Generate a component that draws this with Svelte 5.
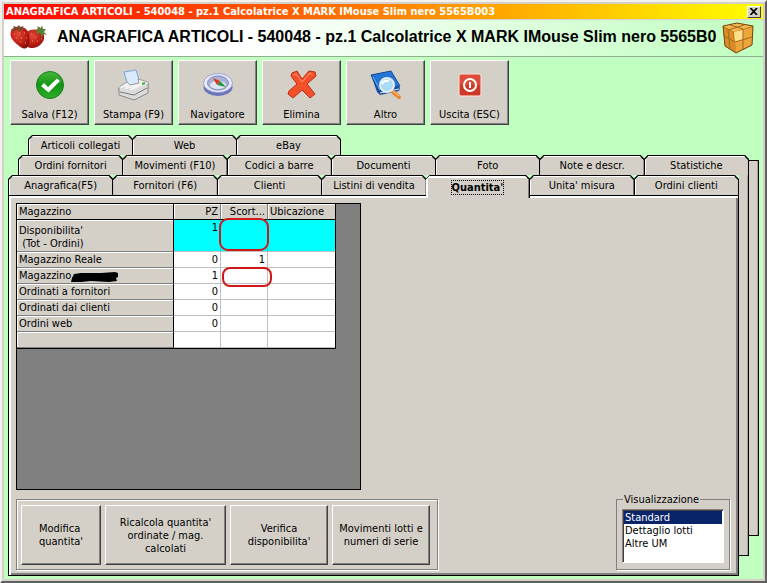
<script lang="ts">
  type Tool = { id: string; label: string };

  const title = 'ANAGRAFICA ARTICOLI - 540048 - pz.1 Calcolatrice X MARK IMouse Slim nero 5565B003';
  const heading = 'ANAGRAFICA ARTICOLI - 540048 - pz.1 Calcolatrice X MARK IMouse Slim nero 5565B0';

  const tools: Tool[] = [
    { id: 'save', label: 'Salva (F12)' },
    { id: 'print', label: 'Stampa (F9)' },
    { id: 'nav', label: 'Navigatore' },
    { id: 'delete', label: 'Elimina' },
    { id: 'other', label: 'Altro' },
    { id: 'exit', label: 'Uscita (ESC)' }
  ];

  const tabRows = [
    ['Articoli collegati', 'Web', 'eBay'],
    ['Ordini fornitori', 'Movimenti (F10)', 'Codici a barre', 'Documenti', 'Foto', 'Note e descr.', 'Statistiche'],
    ['Anagrafica(F5)', 'Fornitori (F6)', 'Clienti', 'Listini di vendita', "Quantita'", "Unita' misura", 'Ordini clienti']
  ];

  const rows = [
    { name: "Disponibilita'\n (Tot - Ordini)", pz: '1', scorta: '', total: true, mark: 'tall' },
    { name: 'Magazzino Reale', pz: '0', scorta: '1' },
    { name: 'Magazzino', pz: '1', scorta: '', hidden: true, mark: 'low' },
    { name: 'Ordinati a fornitori', pz: '0', scorta: '' },
    { name: 'Ordinati dai clienti', pz: '0', scorta: '' },
    { name: 'Ordini web', pz: '0', scorta: '' },
    { name: '', pz: '', scorta: '' }
  ];

  const actions = [
    { label: "Modifica\nquantita'", size: 'small' },
    { label: "Ricalcola quantita'\nordinate / mag.\ncalcolati", size: 'large' },
    { label: "Verifica\ndisponibilita'", size: 'medium' },
    { label: 'Movimenti lotti e\nnumeri di serie', size: 'medium' }
  ];

  let active = $state("Quantita'");
  let view = $state('Standard');
</script>

<main class="window">
  <div class="titlebar">
    <span>{title}</span>
    <button type="button" class="close" aria-label="Chiudi">
      <svg width="8" height="7" viewBox="0 0 8 7"><path d="M0.500 0 L7 7 M7 0 L0.500 7" stroke="#000" stroke-width="1.700" /></svg>
    </button>
  </div>

  <header>
    <svg class="berries" width="40" height="26" viewBox="0 0 40 26">
      <defs>
        <radialGradient id="berry" cx="0.4" cy="0.35" r="0.7">
          <stop offset="0" stop-color="#e04a34" />
          <stop offset="0.6" stop-color="#c02015" />
          <stop offset="1" stop-color="#860e0a" />
        </radialGradient>
      </defs>
      <path d="M18 7 C22 3 31 4 34 8 C37 13 34 19 28 22 C23 24 18 23 17 20 C15 16 15 11 18 7Z" fill="url(#berry)" />
      <path d="M3 4 C8 1 14 1 18 5 C21 9 21 17 19 21 C17 25 13 24 9 20 C4 16 -1 11 3 4Z" fill="url(#berry)" />
      <path d="M2 5 L5 3 L4 1 L8 2 L10 0 L11 2 L15 1 L13 3 L17 4 L12 5 L10 7 L9 4 L5 6Z" fill="#7a4a28" />
      <path d="M27 5 L29 3 L28 1 L32 3 L33 0 L34 4 L37 4 L35 7 L38 10 L34 9 L33 13 L31 8 L28 9Z" fill="#5d8036" />
      <path d="M5 9h1M10 8h1M15 8h1M7 13h1M12 13h1M17 13h1M11 17h1M16 18h1M22 9h1M26 12h1M23 16h1M28 16h1M32 14h1" stroke="#ec8f6c" />
    </svg>
    <h1>{heading}</h1>
    <svg class="box" width="32" height="32" viewBox="0 0 32 32">
      <path d="M1 4 L15 1 L31 4 L30 23 L14 31 L3 24Z" fill="#b36a12" />
      <path d="M1 4 L15 1 L31 4 L12 10Z" fill="#f0b850" />
      <path d="M1 5 L11 10 L14 30 L3 24Z" fill="#d88e26" />
      <path d="M12 10 L31 5 L30 23 L14 31Z" fill="#eca63a" />
      <path d="M12 10 L21 8 L21 18 L13 20Z" fill="#ffe08a" />
      <path d="M2 14 L13 20 L30 15 M21 7 L21 27 M8 3 L21 7 M22 3 L6 8 L8 26" fill="none" stroke="#a8651a" />
      <path d="M1 4 L15 1 L31 4 L30 23 L14 31 L3 24Z" fill="none" stroke="#774310" />
    </svg>
  </header>

  <nav class="toolbar">
    {#each tools as tool}
      <button type="button" class="tool">
        <svg width="36" height="32" viewBox="0 0 36 32">
          {#if tool.id === 'save'}
            <defs>
              <linearGradient id="green" x2="0" y2="1">
                <stop offset="0" stop-color="#45b83a" />
                <stop offset="0.5" stop-color="#149516" />
                <stop offset="1" stop-color="#2cae28" />
              </linearGradient>
            </defs>
            <circle cx="18" cy="16" r="13.500" fill="url(#green)" stroke="#16801a" />
            <path d="M9 17 L12 14 L16 18 L25 9.500 L28 12 L16.500 23.500Z" fill="#fff" />
          {:else if tool.id === 'print'}
            <path d="M8 3 L20 1 L24 14 L12 17Z" fill="#d9e9fb" stroke="#7aa4da" />
            <path d="M3 18 L11 13 L14 16 L23 14 L22 10 L32 13 L32 20 L18 25 L3 22Z" fill="#f3f3f3" stroke="#9a9a9a" />
            <path d="M3 18 L18 21 L32 14 L32 24 L18 31 L3 26Z" fill="#dcdcdc" stroke="#8a8a8a" />
            <path d="M4 23 L18 26 L31 19" fill="none" stroke="#777" />
            <path d="M3 18 L18 21 L32 14" fill="none" stroke="#fff" />
            <path d="M26 15 L29 14" stroke="#39b52b" stroke-width="2" />
          {:else if tool.id === 'nav'}
            <ellipse cx="18" cy="18" rx="14.500" ry="9" fill="#6a74b8" />
            <ellipse cx="18" cy="14" rx="14.500" ry="9.500" fill="#e6e9f8" stroke="#a0a6d0" />
            <ellipse cx="18" cy="14" rx="10.500" ry="7" fill="#a9b1d6" stroke="#8188bc" />
            <ellipse cx="18" cy="16" rx="8" ry="4" fill="#dfe5f6" />
            <path d="M13 9 L20 12 L17 16Z" fill="#e5331e" />
            <path d="M20 12 L26 18 L17 16Z" fill="#24963a" />
          {:else if tool.id === 'delete'}
            <path d="M8 4 L13 2 L18 10 L25 2 L31 3 L32 7 L23 15 L31 25 L26 29 L18 21 L9 29 L4 25 L5 22 L13 15 L7 7Z" fill="#f4512a" stroke="#b92d12" stroke-linejoin="round" />
            <path d="M9 6 L12 5 L18 13 L26 4 L29 6" fill="none" stroke="#ff9a73" />
          {:else if tool.id === 'other'}
            <path d="M3 6 L23 3 L32 19 L31 22 L12 26 L9 23Z" fill="#174f9e" />
            <path d="M3 6 L23 2 L32 17 L11 22Z" fill="#2476d6" stroke="#154a92" />
            <path d="M5 8 L12 21" stroke="#68aef0" />
            <path d="M12 24 L31 20" stroke="#e7f0fa" />
            <path d="M25 23 L31 28" stroke="#e8862a" stroke-width="4" stroke-linecap="round" />
            <path d="M24 21 L31 27" stroke="#ffd093" />
            <circle cx="19" cy="16" r="7" fill="#a9dcf4" stroke="#e4edf3" stroke-width="2" />
            <path d="M14 15 Q16 11 21 12" fill="none" stroke="#fff" stroke-width="2" />
          {:else}
            <rect x="7" y="5" width="22" height="22" rx="2" fill="#dc4c38" stroke="#fbe0d8" />
            <rect x="8" y="16" width="20" height="10" fill="#cc3a26" />
            <circle cx="18" cy="16" r="6" fill="none" stroke="#fff" stroke-width="2" />
            <path d="M18 13 V19" stroke="#fff" stroke-width="2" />
          {/if}
        </svg>
        <span>{tool.label}</span>
      </button>
    {/each}
  </nav>

  <div class="notebook">
    <div class="sheet far"></div>
    <div class="sheet near"></div>

    {#each tabRows as tabs, i}
      <div class="tabs level-{i + 1}" role="tablist">
        {#each tabs as tab}
          <button
            type="button"
            role="tab"
            class="tab"
            class:active={tab === active}
            aria-selected={tab === active}
            onclick={() => (active = tab)}
          >
            <span class="face"><span class="caption">{tab}</span></span>
          </button>
        {/each}
      </div>
    {/each}

    <section class="panel">
      <div class="grid-box">
        <table>
          <thead>
            <tr>
              <th class="name">Magazzino</th>
              <th class="num">PZ</th>
              <th class="num">Scort...</th>
              <th class="place">Ubicazione</th>
            </tr>
          </thead>
          <tbody>
            {#each rows as row}
              <tr class:total={row.total}>
                <th scope="row">{row.name}{#if row.hidden}<svg class="scribble" width="48" height="11" viewBox="0 0 48 11"><path d="M3 2 L10 1 L30 1 L44 0 L47 1 L47 5 L45 6 L46 9 L38 10 L20 9 L10 10 L0 10 L1 6Z" /></svg>{/if}</th>
                <td>{row.pz}</td>
                <td class="marked">{row.scorta}{#if row.mark}<span class="ring {row.mark}"></span>{/if}</td>
                <td></td>
              </tr>
            {/each}
          </tbody>
        </table>
      </div>

      <div class="footer">
        <div class="actions">
          {#each actions as action}
            <button type="button" class="action {action.size}"><span>{action.label}</span></button>
          {/each}
        </div>

        <fieldset>
          <legend><label for="view">Visualizzazione</label></legend>
          <select id="view" size="4" bind:value={view}>
            <option>Standard</option>
            <option>Dettaglio lotti</option>
            <option>Altre UM</option>
          </select>
        </fieldset>
      </div>
    </section>
  </div>
</main>

<style>
  :global(body) {
    background: #d4d0c8;
  }

  .window {
    --face: #d4d0c8;
    --green: #c0ffc0;
    box-sizing: border-box;
    display: flex;
    flex-direction: column;
    min-height: 100vh;
    padding: 2px;
    border: 2px solid;
    border-color: #f4f2ee #606060 #606060 #f4f2ee;
    background: var(--face);
    color: #000;
    font: 11px/13px Tahoma, 'DejaVu Sans Condensed', 'DejaVu Sans', sans-serif;
  }

  button {
    box-sizing: border-box;
    margin: 0;
    padding: 0;
    border: 0;
    border-radius: 0;
    background: var(--face);
    color: inherit;
    font: inherit;
  }

  .titlebar {
    display: flex;
    align-items: center;
    justify-content: space-between;
    height: 15px;
    margin-bottom: 1px;
    padding: 0 2px;
    background: linear-gradient(90deg, #f00, #ff8000 50%, #ff0);
    color: #fff;
    font-weight: bold;
    white-space: nowrap;
  }

  .close {
    display: grid;
    place-items: center;
    flex: none;
    width: 14px;
    height: 12px;
    border: 1px solid;
    border-color: #fff #404040 #404040 #fff;
  }

  header {
    display: flex;
    align-items: center;
    height: 36px;
    padding: 0 9px 0 5px;
    border-bottom: 1px solid #90b090;
    background: linear-gradient(90deg, #fff 30%, var(--green));
  }

  h1 {
    flex: 1;
    min-width: 0;
    margin: 0 0 2px 8px;
    font: bold 16px/20px 'Liberation Sans', Arial, sans-serif;
    white-space: nowrap;
  }

  .berries,
  .box {
    flex: none;
  }

  .toolbar {
    display: flex;
    gap: 5px;
    padding: 3px 6px 10px;
    background: var(--green);
  }

  .tool {
    display: flex;
    flex-direction: column;
    align-items: center;
    gap: 7px;
    width: 79px;
    height: 65px;
    padding-top: 8px;
    white-space: nowrap;
  }

  .tool,
  .action {
    border: 1px solid;
    border-color: #fff #404040 #404040 #fff;
    box-shadow: inset -1px -1px #808080;
  }

  .notebook {
    flex: 1;
    display: grid;
    grid-template-columns: 1fr 10px 10px;
    grid-template-rows: 20px 20px 20px 1fr 20px 20px;
    padding: 0 4px 3px;
    background: var(--green);
  }

  .sheet {
    border-right: 1px solid #000;
    border-bottom: 1px solid #000;
    background: var(--face);
    box-shadow: inset -1px 0 #a8a49c;
  }

  .near {
    grid-area: 3 / 2 / 6 / 3;
  }

  .far {
    grid-area: 2 / 3 / 5 / 4;
    margin-top: 5px;
    border-top: 1px solid #000;
  }

  .tabs {
    display: flex;
  }

  .level-1 {
    grid-area: 1 / 1 / 2 / 4;
    padding-left: 20px;
  }

  .level-1 .tab {
    flex: 0 0 105px;
  }

  .level-2 {
    grid-area: 2 / 1 / 3 / 3;
    padding-left: 10px;
  }

  .level-3 {
    grid-area: 3 / 1 / 4 / 2;
    z-index: 1;
  }

  .tab {
    flex: 1 1 0;
    display: flex;
    padding: 1px 1px 0;
    background: #000;
    white-space: nowrap;
    clip-path: polygon(0 4px, 4px 0, calc(100% - 4px) 0, 100% 4px, 100% 100%, 0 100%);
  }

  .tab + .tab {
    margin-left: -1px;
  }

  .face {
    flex: 1;
    display: grid;
    place-items: center;
    background: linear-gradient(135deg, #fff 3px, var(--face) 3px);
    box-shadow: inset 1px 1px #fff;
    clip-path: polygon(0 4px, 4px 0, calc(100% - 4px) 0, 100% 4px, 100% 100%, 0 100%);
  }

  .active {
    z-index: 1;
    margin-bottom: -3px;
    padding-left: 0;
    background: linear-gradient(90deg, #000 calc(100% - 5px), #000 0);
    font-weight: bold;
  }

  .active .face {
    box-shadow: inset 2px 2px #fff, inset -1px 0 #808080;
  }

  .active .caption {
    outline: 1px dotted #000;
  }

  .panel {
    grid-area: 4 / 1 / 7 / 2;
    display: flex;
    flex-direction: column;
    gap: 9px;
    padding: 7px 7px 5px;
    border: 1px solid #000;
    background: var(--face);
    box-shadow: inset 2px 2px #fff, inset -2px -2px #808080;
  }

  .grid-box {
    flex: 1;
    align-self: flex-start;
    width: 343px;
    border: 1px solid #000;
    background: #808080;
  }

  table {
    border-collapse: separate;
    border-spacing: 0;
    table-layout: fixed;
    width: 319px;
    border-right: 1px solid #000;
    border-bottom: 1px solid #000;
  }

  th,
  td {
    box-sizing: border-box;
    height: 16px;
    padding: 1px 2px 0;
    border-right: 1px solid #c0c0c0;
    border-bottom: 1px solid #c0c0c0;
    background: #fff;
    font-weight: normal;
    line-height: 13px;
    text-align: right;
    vertical-align: top;
    white-space: pre;
  }

  th {
    border-color: #808080;
    background: var(--face);
    box-shadow: inset 1px 1px #fff;
    text-align: left;
  }

  thead th {
    border-bottom-color: #000;
  }

  th:first-child {
    border-right-color: #000;
  }

  td:last-child,
  th:last-child {
    border-right: 0;
  }

  .name {
    width: 157px;
  }

  .num {
    width: 47px;
    text-align: right;
  }

  .total th,
  .total td {
    height: 32px;
  }

  .total th {
    padding-top: 4px;
  }

  .total td {
    border-right-color: #00d8d8;
    background: #0ff;
  }

  .marked {
    position: relative;
  }

  .ring {
    position: absolute;
    z-index: 1;
    box-sizing: border-box;
    width: 50px;
    border: 2px solid #d01818;
  }

  .tall {
    top: -2px;
    left: -2px;
    height: 33px;
    border-radius: 9px;
  }

  .low {
    top: -1px;
    left: 1px;
    height: 20px;
    border-radius: 8px;
  }

  .scribble {
    vertical-align: -3px;
    margin-bottom: -1px;
  }

  .footer {
    display: flex;
    align-items: stretch;
    justify-content: space-between;
  }

  .actions {
    display: flex;
    gap: 4px;
    padding: 5px 7px 4px 4px;
    border: 1px solid #808080;
    box-shadow: inset 1px 1px #fff, 1px 1px #fff;
  }

  .action {
    height: 60px;
    white-space: pre;
  }

  .action span {
    display: inline-block;
  }

  .small {
    width: 80px;
  }

  .small span {
    text-align: left;
  }

  .large {
    width: 121px;
  }

  .medium {
    width: 98px;
  }

  fieldset {
    box-sizing: border-box;
    width: 114px;
    min-width: 0;
    margin: -6px 1px 0 0;
    padding: 3px 5px 4px;
    border: 1px solid #808080;
    box-shadow: 1px 1px #fff;
  }

  legend {
    margin-left: 1px;
    padding: 0 1px;
    white-space: nowrap;
  }

  select {
    display: block;
    box-sizing: border-box;
    width: 100%;
    height: 54px;
    padding: 1px;
    overflow: hidden;
    border: 1px solid;
    border-color: #808080 #fff #fff #808080;
    border-radius: 0;
    outline: 0;
    background: #fff;
    box-shadow: inset 1px 1px #404040;
    font: inherit;
  }

  option {
    min-height: 13px;
    padding: 0 1px;
    color: #000;
    line-height: 13px;
  }

  option:checked {
    background: #0a246a linear-gradient(#0a246a, #0a246a);
    color: #fff;
  }
</style>
